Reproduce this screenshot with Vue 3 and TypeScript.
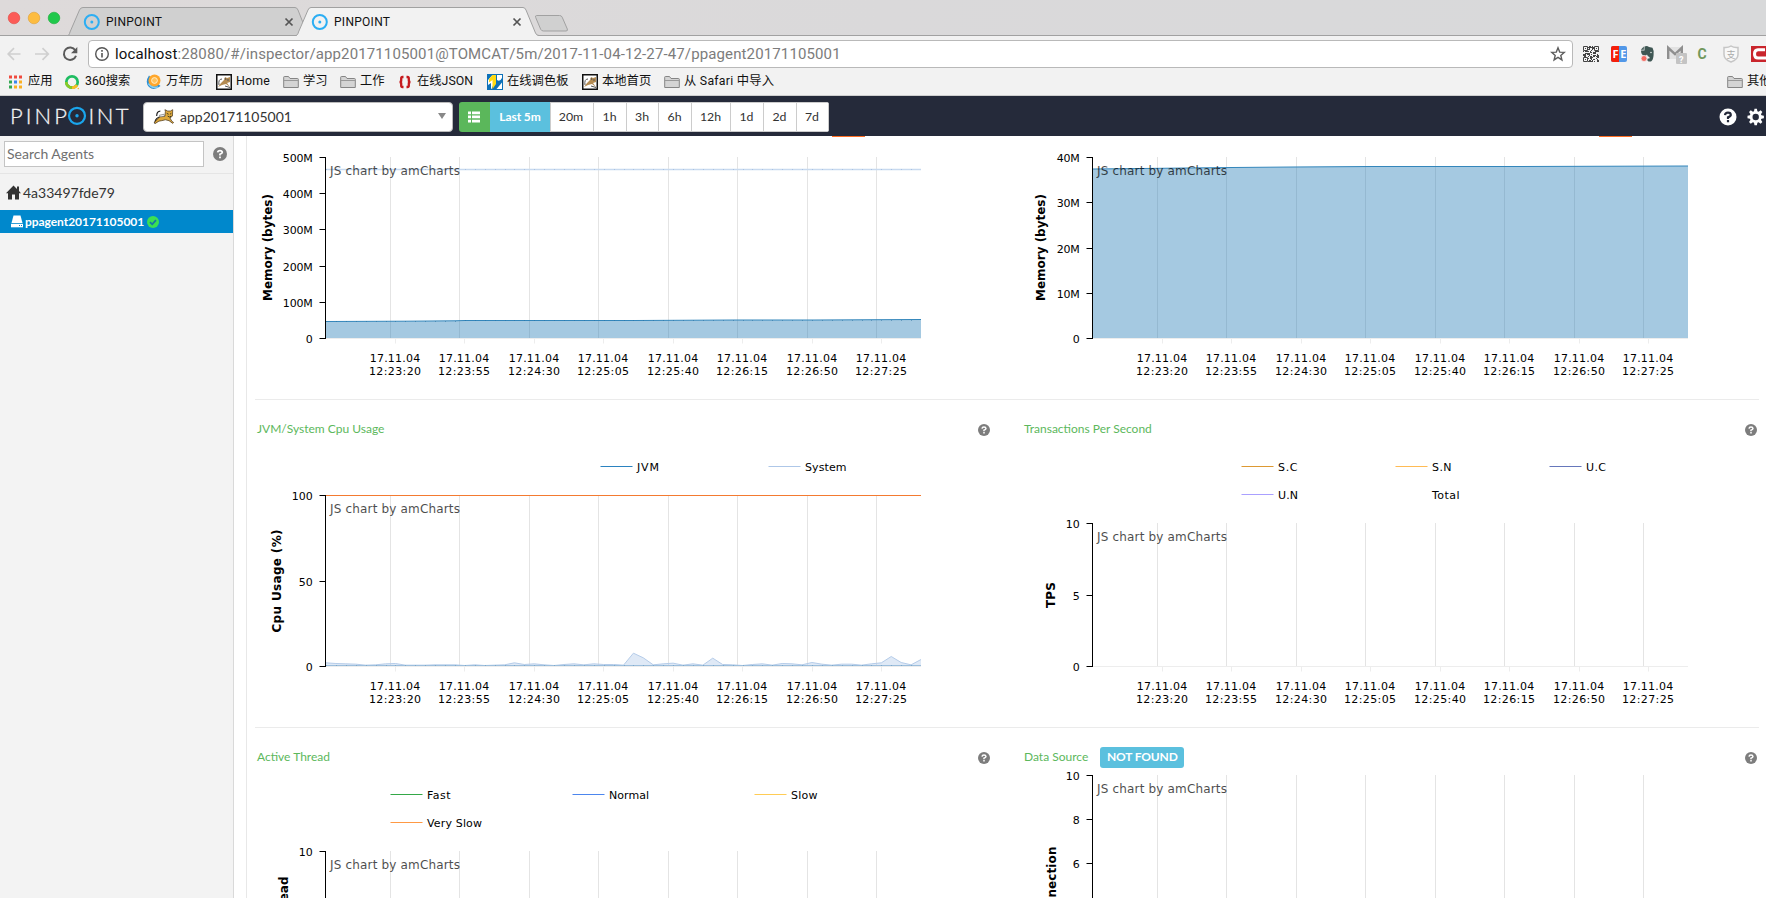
<script setup lang="ts">
interface Tick { y: number; label: string; w: number }
interface Legend { x: number; y: number; label: string; w: number; color: string }
interface Chart {
  key: string
  title: string
  badge?: string
  top: number
  bottom: number
  labelX: number
  ticks: Tick[]
  axis: { text: string; x: number; y: number; w: number }
  legends: Legend[]
  kind?: 'heap' | 'nonheap' | 'cpu'
}

const gridX = [135.5, 204.5, 274.5, 343.5, 413.5, 482.5, 552.5, 621.5]
const times = ['12:23:20', '12:23:55', '12:24:30', '12:25:05', '12:25:40', '12:26:15', '12:26:50', '12:27:25']

const systemCpu = [
  11, 9, 8, 7, 4, 5, 8, 9, 4, 4, 4, 5, 5, 5, 3, 5, 3, 4, 5, 11, 6, 8, 5, 3, 6, 8, 5, 8, 6, 6,
  4, 40, 26, 5, 8, 10, 4, 8, 4, 25, 6, 5, 3, 6, 8, 4, 9, 8, 5, 12, 7, 4, 7, 7, 4, 8, 11, 30, 12, 5, 21,
]
const step = 595 / 60
const cpuPoints = systemCpu.map((v, i) => `${(71 + i * step).toFixed(2)},${(220.5 - v / 3).toFixed(2)}`).join(' ')
const cpuArea = `71,220 ${cpuPoints} 666,220`
const dots = Array.from({ length: 60 }, (_, i) => Math.round(71 + i * step))

const rows: { key: string; height: number; header: boolean; charts: Chart[] }[] = [
  {
    key: 'memory', height: 263, header: false,
    charts: [
      {
        key: 'heap', title: '', top: 21.5, bottom: 202.5, labelX: 57.8, kind: 'heap',
        ticks: [
          { y: 21.5, label: '500M', w: 30 }, { y: 57.5, label: '400M', w: 30 }, { y: 93.5, label: '300M', w: 30 },
          { y: 130.5, label: '200M', w: 30 }, { y: 166.5, label: '100M', w: 30 }, { y: 202.5, label: '0', w: 7 },
        ],
        axis: { text: 'Memory (bytes)', x: 16.5, y: 111.5, w: 107 }, legends: [],
      },
      {
        key: 'nonheap', title: '', top: 21.5, bottom: 202.5, labelX: 57.8, kind: 'nonheap',
        ticks: [
          { y: 21.5, label: '40M', w: 23 }, { y: 66.5, label: '30M', w: 23 }, { y: 112.5, label: '20M', w: 23 },
          { y: 157.5, label: '10M', w: 23 }, { y: 202.5, label: '0', w: 7 },
        ],
        axis: { text: 'Memory (bytes)', x: 23, y: 111.5, w: 107 }, legends: [],
      },
    ],
  },
  {
    key: 'load', height: 281, header: true,
    charts: [
      {
        key: 'cpu', title: 'JVM/System Cpu Usage', top: 49.5, bottom: 220.5, labelX: 57.8, kind: 'cpu',
        ticks: [{ y: 49.5, label: '100', w: 21 }, { y: 135.5, label: '50', w: 14 }, { y: 220.5, label: '0', w: 7 }],
        axis: { text: 'Cpu Usage (%)', x: 26, y: 135, w: 103 },
        legends: [
          { x: 345.5, y: 20.5, label: 'JVM', w: 22, color: '#2b83c0' },
          { x: 513.5, y: 20.5, label: 'System', w: 41.5, color: '#aec7e8' },
        ],
      },
      {
        key: 'tps', title: 'Transactions Per Second', top: 77.5, bottom: 220.5, labelX: 57.8,
        ticks: [{ y: 77.5, label: '10', w: 14 }, { y: 149.5, label: '5', w: 7 }, { y: 220.5, label: '0', w: 7 }],
        axis: { text: 'TPS', x: 33, y: 149, w: 26 },
        legends: [
          { x: 219.5, y: 20.5, label: 'S.C', w: 19.5, color: '#dd9933' },
          { x: 373.5, y: 20.5, label: 'S.N', w: 19.5, color: '#ffbb55' },
          { x: 527.5, y: 20.5, label: 'U.C', w: 20, color: '#6677bb' },
          { x: 219.5, y: 48.5, label: 'U.N', w: 20, color: '#aaa0ff' },
          { x: 373.5, y: 48.5, label: 'Total', w: 27.5, color: 'none' },
        ],
      },
    ],
  },
  {
    key: 'threads', height: 124, header: true,
    charts: [
      {
        key: 'active', title: 'Active Thread', top: 77.5, bottom: 220.5, labelX: 57.8,
        ticks: [{ y: 77.5, label: '10', w: 14 }],
        axis: { text: 'Active Thread', x: 33, y: 149, w: 93 },
        legends: [
          { x: 135.5, y: 20.5, label: 'Fast', w: 23.5, color: '#34a847' },
          { x: 317.5, y: 20.5, label: 'Normal', w: 40, color: '#4c86ee' },
          { x: 499.5, y: 20.5, label: 'Slow', w: 26.5, color: '#ffcc55' },
          { x: 135.5, y: 48.5, label: 'Very Slow', w: 55, color: '#ff9944' },
        ],
      },
      {
        key: 'datasource', title: 'Data Source', badge: 'NOT FOUND', top: 1.5, bottom: 220.5, labelX: 57.8,
        ticks: [{ y: 1.5, label: '10', w: 14 }, { y: 45.5, label: '8', w: 7 }, { y: 89.5, label: '6', w: 7 }],
        axis: { text: 'Connection', x: 34, y: 111, w: 77 }, legends: [],
      },
    ],
  },
]

const tabs = [{ x: 68, active: false }, { x: 296, active: true }]
const ranges = [
  { label: '20m', cls: 'r20' }, { label: '1h', cls: 'r33' }, { label: '3h', cls: 'r32' }, { label: '6h', cls: 'r33' },
  { label: '12h', cls: 'r39' }, { label: '1d', cls: 'r33' }, { label: '2d', cls: 'r33' }, { label: '7d', cls: 'r32' },
]
const bookmarks = [
  { icon: 'apps', label: '应用', cls: 'b1' }, { icon: 'so', label: '360搜索', cls: 'b2' }, { icon: 'cal', label: '万年历', cls: 'b3' },
  { icon: 'cat', label: 'Home', cls: 'b4' }, { icon: 'folder', label: '学习', cls: 'b5' }, { icon: 'folder', label: '工作', cls: 'b6' },
  { icon: 'json', label: '在线JSON', cls: 'b7' }, { icon: 'palette', label: '在线调色板', cls: 'b8' }, { icon: 'cat', label: '本地首页', cls: 'b9' },
  { icon: 'folder', label: '从 Safari 中导入', cls: 'b10' },
]
const appColors = ['#f04a3e', '#f04a3e', '#f04a3e', '#34a853', '#3b86ee', '#fbb023', '#34a853', '#fbb023', '#fbb023']

const qr: { x: number; y: number }[] = []
let seed = 29
for (let y = 0; y < 16; y++) {
  for (let x = 0; x < 16; x++) {
    seed = (seed * 1103 + 12345) % 65536
    const finder = (x < 5 && y < 5) || (x > 10 && y < 5) || (x < 5 && y > 10)
    if (!finder && (seed >> 5) % 100 < 56) qr.push({ x, y })
  }
}
</script>

<template>
  <div class="window">
    <div class="tabstrip">
      <svg class="tabshapes" width="1766" height="36" viewBox="0 0 1766 36">
        <circle cx="14" cy="18" r="5.8" fill="#fc5b57" stroke="#e2463f" stroke-width=".6" />
        <circle cx="34" cy="18" r="5.8" fill="#fdbc40" stroke="#e0a032" stroke-width=".6" />
        <circle cx="54" cy="18" r="5.8" fill="#20c84b" stroke="#18ac36" stroke-width=".6" />
        <path d="M68 35.500 C69 35 69.500 34 70 32 L79.500 10 Q80.500 7.500 83 7.500 H295 Q297 7.500 298 10 L308 35.500Z" fill="#d0d0d0" stroke="#a1a1a1" />
        <path d="M0 35.500H1766" stroke="#a1a1a1" />
        <path d="M296 36 C297.500 35 298 34 298.500 32 L308 10 Q309 7.500 311 7.500 H523 Q525 7.500 526 10 L535.500 33 Q536.500 35.500 539 36Z" fill="#f2f2f2" />
        <path d="M296 35.500 C297.500 35 298 34 298.500 32 L308 10 Q309 7.500 311 7.500 H523 Q525 7.500 526 10 L535.500 33 Q536.500 35.500 539 35.500" fill="none" stroke="#a1a1a1" />
        <path d="M536.500 15.500H559.500Q561.500 15.500 562.200 17.200L567.300 29Q568 31 566 31H543.500Q541.500 31 540.700 29.300L535.700 17.500Q535 15.500 536.500 15.500Z" fill="#d0d0d0" stroke="#a1a1a1" />
        <g v-for="t in tabs" :key="t.x">
          <circle :cx="t.x + 23.800" cy="22" r="7" fill="none" stroke="#2caef3" stroke-width="2" />
          <circle :cx="t.x + 23.800" cy="22" r="1.500" fill="#2caef3" />
          <text :x="t.x + 38" y="26" textLength="56" class="tabtext">PINPOINT</text>
          <path :d="`M${t.x + 217.500} 18.500l7 7m0-7l-7 7`" stroke="#555" stroke-width="1.700" />
        </g>
      </svg>
    </div>

    <div class="toolbar">
      <svg class="nav" width="88" height="32" viewBox="0 0 88 32" fill="none">
        <path d="M20.500 16H8.500M14 10.200L8.200 16L14 21.800" stroke="#cfcfcf" stroke-width="1.700" />
        <path d="M35 16H48M42.500 10.200L48.300 16L42.500 21.800" stroke="#cfcfcf" stroke-width="1.700" />
        <path d="M75.300 12.300A6.200 6.200 0 1 0 76 17.700" stroke="#5a5a5a" stroke-width="2" />
        <path d="M77.300 9v6.300H71z" fill="#5a5a5a" />
      </svg>
      <div class="urlbox">
        <svg width="16" height="16" viewBox="0 0 16 16"><circle cx="8" cy="8" r="6.300" fill="none" stroke="#555" stroke-width="1.400" /><path d="M8 7v4.500M8 4v1.700" stroke="#555" stroke-width="1.600" /></svg>
        <span class="url"><b>localhost</b>:28080/#/inspector/app20171105001@TOMCAT/5m/2017-11-04-12-27-47/ppagent20171105001</span>
        <svg class="star" width="16" height="16" viewBox="0 0 16 16"><path d="M8 1.800l1.700 4.300 4.600.3-3.500 3 1.100 4.500L8 11.400l-3.900 2.500 1.100-4.500-3.500-3 4.600-.3z" fill="none" stroke="#5d5d5d" stroke-width="1.400" /></svg>
      </div>
      <svg class="exts" width="193" height="32" viewBox="0 0 193 32">
        <g transform="translate(10 8)" fill="#444">
          <rect v-for="(p, i) in qr" :key="i" :x="p.x" :y="p.y" width="1" height="1" />
          <path d="M.5.5h4v4h-4zM11.500.5h4v4h-4zM.5 11.500h4v4h-4z" fill="none" stroke="#444" /><path d="M2 2h1v1H2zM13 2h1v1h-1zM2 13h1v1H2z" />
        </g>
        <rect x="38" y="8" width="16" height="16" rx="2" fill="#5298e8" /><path d="M40 8H46V24H40a2 2 0 0 1-2-2V10a2 2 0 0 1 2-2z" fill="#f5200b" />
        <text x="39.500" y="20" textLength="14" class="fe">FE</text>
        <path d="M71.500 8.500Q74 7.500 76 9L79.500 9.800Q81 12 80.600 17 80.300 22 78 23.500H75.500Q73.500 22.500 74.500 20.500H76.500V19Q74.500 18.700 74 16.500 72.500 18.500 70.500 17.500 68 16.500 68 12.500H71.500z" fill="#3f5754" />
        <path d="M67.800 11.800l3-3.300v3.300z" fill="#3f5754" /><circle cx="78" cy="14.500" r=".8" fill="#dfe5e4" /><circle cx="71" cy="20.500" r="3" fill="#f56b62" stroke="#f2f2f2" stroke-width=".8" />
        <path d="M94 9H110V21H94z" fill="#e2e2e2" /><path d="M95.200 21V9.800l6.800 6.400 6.800-6.400V21" fill="none" stroke="#8f8f8f" stroke-width="2.400" />
        <rect x="103" y="15" width="11" height="11" rx="1" fill="#c4c4c4" /><text x="106" y="24.500" class="qm">?</text>
        <text x="124.500" y="20.500" class="greenc">C</text>
        <path d="M158 8q3 2 7 1.500v7q0 5-7 7.500-7-2.500-7-7.500v-7q4 .5 7-1.500z" fill="#f8f8f8" stroke="#c6c6c6" stroke-width="1.500" />
        <text x="153.500" y="19.500" class="zhi">支</text>
        <rect x="178" y="8" width="18" height="16" fill="#c9252c" /><path d="M192 11.800H185Q181.500 12 181.500 16T185 20H193" fill="none" stroke="#fff" stroke-width="3" />
      </svg>
    </div>

    <div class="bookmarks">
      <div v-for="b in bookmarks" :key="b.cls" class="bm" :class="b.cls">
        <svg width="16" height="16" viewBox="0 0 16 16">
          <g v-if="b.icon === 'apps'"><rect v-for="(c, i) in appColors" :key="i" :x="2 + (i % 3) * 5" :y="1.500 + Math.floor(i / 3) * 5" width="3" height="3" :fill="c" /></g>
          <g v-else-if="b.icon === 'so'" fill="none" stroke-width="2.700"><circle cx="8" cy="8" r="5.700" stroke="#20bd62" /><path d="M2.300 8A5.700 5.700 0 0 0 8 13.700" stroke="#8ac926" /><path d="M8 13.700A5.700 5.700 0 0 0 13 11" stroke="#f9bd25" /><circle cx="14.300" cy="14.500" r=".8" fill="#f9bd25" stroke="none" /></g>
          <g v-else-if="b.icon === 'cal'"><path d="M3 1.500Q-1.500 8 3 13 8 17.500 14.500 12L10 8z" fill="#2a8fd5" /><path d="M2.500 9.500q3 5 9.500 3.500" stroke="#86cdf0" stroke-width="1.600" fill="none" /><circle cx="8.500" cy="6.500" r="6" fill="#ffa62b" /><circle cx="8.500" cy="6.500" r="2.900" fill="#ffc15c" stroke="#fff2cf" stroke-width=".9" /></g>
          <g v-else-if="b.icon === 'folder'"><path d="M.7 13.500V3.200Q.7 2.500 1.500 2.500H5.500L7 4.500H14.500Q15.300 4.500 15.300 5.300V13.500z" fill="#d4d4d4" stroke="#858585" /><path d="M1 6.500H15" stroke="#999" /></g>
          <g v-else-if="b.icon === 'json'" fill="none" stroke="#c5191d" stroke-width="2.300"><path d="M6.500 3H5.500Q4.200 3 4.200 4.500V6.500Q4.200 8 2.500 8 4.200 8 4.200 9.500V11.500Q4.200 13 5.500 13H6.500M9.500 3h1q1.300 0 1.300 1.500v2Q11.800 8 13.500 8q-1.700 0-1.700 1.500v2q0 1.500-1.300 1.500h-1" /></g>
          <g v-else-if="b.icon === 'palette'"><rect width="16" height="16" fill="#0d71b9" /><path d="M1 6 5 1.500H7V9L4.500 15H4V9L1 11z" fill="#fff" /><path d="M5.500 1H9V10L5.500 15V6L2 8.500V5z" fill="#ffda12" /><path d="M10 1H15V4Q13 8 10 6z" fill="#fff" /><path d="M9.500 15 15 8.500V15z" fill="#fff" /></g>
          <g v-else><rect x=".75" y=".75" width="14.500" height="14.500" fill="#fff" stroke="#111" stroke-width="1.500" /><path d="M2 13l3-4 3-3 1-3 2 1 3-1v5l-3 1 3 4-4-3-4 1z" fill="#b48b51" /><path d="M3 11q-1-6 3-6M9 12l5 1.500M9 4l1 2m2-1v2" stroke="#555" fill="none" /></g>
        </svg>
        <span>{{ b.label }}</span>
      </div>
      <div class="bm other">
        <svg width="16" height="16" viewBox="0 0 16 16"><path d="M.7 13.500V3.200Q.7 2.500 1.500 2.500H5.500L7 4.500H14.500Q15.300 4.500 15.300 5.300V13.500z" fill="#d4d4d4" stroke="#858585" /><path d="M1 6.500H15" stroke="#999" /></svg>
        <span>其他</span>
      </div>
    </div>

    <header class="appbar">
      <svg class="logo" width="143" height="40" viewBox="0 0 143 40">
        <text x="10" y="27.500" textLength="57" class="logotext">PINP</text>
        <circle cx="77" cy="19.800" r="8" fill="none" stroke="#1aa5ec" stroke-width="2.200" /><circle cx="77" cy="19.800" r="1.700" fill="#1aa5ec" />
        <text x="88.500" y="27.500" textLength="40" class="logotext">INT</text>
      </svg>
      <div class="appselect">
        <svg width="22" height="18" viewBox="0 0 24 18">
          <path d="M4 8Q4 2.500 8 2.500M1.500 16 5 12 M9 9Q3 9 2 15" fill="none" stroke="#222" stroke-width="1.300" />
          <path d="M4 12l4-3.500 5-.5.500-5-.500-2 3 1.500h3l2.500-1.500-.3 7-2.700 2 2 3.500 2 1.500-1 1-4-3-4-1-4 1-3 .5-4 2.500-1-1z" fill="#dea83a" stroke="#4b3820" stroke-width=".8" />
          <path d="M15 5l2 1m3-1-1.500 1M16 8l2 1 2-1" stroke="#332" fill="none" /><path d="M7 7l5-1 1 2-5 1z" fill="#eee" stroke="#555" stroke-width=".6" />
        </svg>
        <span>app20171105001</span>
        <i class="caret"></i>
      </div>
      <div class="ranges">
        <div class="listbtn"><svg width="12" height="12" viewBox="0 0 12 12" fill="#fff"><path d="M0 .5h3v2.700H0zM4 .5h8v2.700H4zM0 4.600h3v2.700H0zM4 4.600h8v2.700H4zM0 8.700h3v2.700H0zM4 8.700h8v2.700H4z" /></svg></div>
        <div class="last">Last 5m</div>
        <div v-for="r in ranges" :key="r.label" class="range" :class="r.cls">{{ r.label }}</div>
      </div>
      <svg class="tools" width="48" height="20" viewBox="0 0 48 20">
        <circle cx="10" cy="10" r="8.500" fill="#fff" /><path d="M7 8.200Q7.200 5.700 10 5.700T12.800 8Q12.800 9.300 10 10.300V12M10 13v2.200" fill="none" stroke="#252a3a" stroke-width="2.200" />
        <g transform="translate(37.700 10)"><path v-for="a in 8" :key="a" d="M-1.900-4.500-1.200-8.200H1.200L1.900-4.500z" fill="#fff" :transform="`rotate(${a * 45})`" /><circle r="4.600" fill="none" stroke="#fff" stroke-width="2.800" /></g>
      </svg>
    </header>

    <div class="body">
      <aside class="side">
        <div class="search">
          <div class="input">Search Agents</div>
          <svg width="14" height="14" viewBox="0 0 12 12"><circle cx="6" cy="6" r="6" fill="#7d7d7d" /><path d="M4 4.600Q4.200 3 6 3T8 4.500Q8 5.500 6 6.200V7.300M6 8.100v1.500" fill="none" stroke="#fff" stroke-width="1.500" /></svg>
        </div>
        <div class="host">
          <svg width="15" height="15" viewBox="0 0 15 15"><path d="M7.500 .5 11 4V1.500h2V6l2 2.200H13V14.500H9V9.500H6V14.500H2V8.200H0z" fill="#333" /></svg>
          <span>4a33497fde79</span>
        </div>
        <div class="agent">
          <svg width="12" height="13" viewBox="0 0 12 13"><path d="M2.500.5h7L11.500 8H.5z" fill="#fff" /><path d="M0 8.800h12V12.300H0z" fill="#fff" /><path d="M8 10.500h1m1 0h1" stroke="#0a84c6" /></svg>
          <span>ppagent20171105001</span>
          <svg width="12" height="12" viewBox="0 0 12 12"><circle cx="6" cy="6" r="6" fill="#3be052" /><path d="M3 6.200 5.200 8.300 9 4.200" fill="none" stroke="#1577a8" stroke-width="1.800" /></svg>
        </div>
      </aside>

      <main class="content">
        <section v-for="row in rows" :key="row.key" class="row" :class="{ ruled: row.header }">
          <article v-for="c in row.charts" :key="c.key" class="panel">
            <div v-if="row.header" class="phead">
              <span class="ptitle">{{ c.title }}</span>
              <span v-if="c.badge" class="badge">{{ c.badge }}</span>
              <svg class="help" width="12" height="12" viewBox="0 0 12 12"><circle cx="6" cy="6" r="6" fill="#7d7d7d" /><path d="M4 4.600Q4.200 3 6 3T8 4.500Q8 5.500 6 6.200V7.300M6 8.100v1.500" fill="none" stroke="#fff" stroke-width="1.500" /></svg>
            </div>
            <svg class="chart" width="767" :height="row.height" :viewBox="`0 0 767 ${row.height}`">
              <path v-if="!row.header" d="M577 .5h33" stroke="#ff6d22" />
              <g v-for="l in c.legends" :key="l.label">
                <path :d="`M${l.x} ${l.y}h32`" :stroke="l.color" stroke-width="1.200" />
                <text :x="l.x + 36.500" :y="l.y + 4" :textLength="l.w" class="lbl">{{ l.label }}</text>
              </g>
              <path v-for="x in gridX" :key="x" :d="`M${x} ${c.top - .5}V${c.bottom + .5}`" stroke="#e4e4e4" />
              <path :d="`M70 ${c.bottom}H666`" stroke="#ededed" />
              <g v-if="c.kind === 'heap'">
                <path d="M71 33.500H666" stroke="#c7d9ef" stroke-width="1.400" />
                <path v-for="d in dots" :key="d" :d="`M${d} 33.500h1`" stroke="#a9c2e2" />
                <path d="M71 185.500 150 185.200 200 184.800 210 184.500H380L480 184H560L666 183.500V202H71z" fill="#1f77b4" fill-opacity=".4" />
                <path d="M71 185.500 150 185.200 200 184.800 210 184.500H380L480 184H560L666 183.500" fill="none" stroke="#3386bb" />
                <path v-for="d in dots" :key="'b' + d" :d="`M${d} ${185.500 - (d > 200 ? 1 : 0)}h1`" stroke="#2a6f9e" stroke-opacity=".5" />
              </g>
              <g v-else-if="c.kind === 'nonheap'">
                <path d="M71 33 120 32.500 210 31.500 270 31 350 30.500 500 30.500 666 30V202H71z" fill="#1f77b4" fill-opacity=".4" />
                <path d="M71 33 120 32.500 210 31.500 270 31 350 30.500 500 30.500 666 30" fill="none" stroke="#3386bb" />
              </g>
              <g v-else-if="c.kind === 'cpu'">
                <polygon :points="cpuArea" fill="#aec7e8" fill-opacity=".4" />
                <polyline :points="cpuPoints" fill="none" stroke="#b5cce9" />
                <path d="M71 219.500H666" stroke="#9dbfdd" />
                <path v-for="d in dots" :key="d" :d="`M${d} 219.500h1`" stroke="#7ea9cb" />
                <path d="M71 49.500H666" stroke="#f47a30" />
              </g>
              <path v-for="t in c.ticks" :key="t.label" :d="`M64.500 ${t.y}H70`" stroke="#000" />
              <path :d="`M70.500 ${c.top - .5}V${c.bottom + .5}`" stroke="#000" />
              <text v-for="t in c.ticks" :key="t.label" :x="c.labelX - t.w" :y="t.y + 4" :textLength="t.w" class="lbl">{{ t.label }}</text>
              <text :transform="`translate(${c.axis.x} ${c.axis.y + c.axis.w / 2}) rotate(-90)`" :textLength="c.axis.w" class="axis">{{ c.axis.text }}</text>
              <template v-if="c.bottom < row.height">
                <g v-for="(t, i) in times" :key="t">
                  <path :d="`M${gridX[i] + 5} ${c.bottom}v5`" stroke="#ededed" />
                  <text :x="gridX[i] - 20.800" :y="c.bottom + 23" textLength="50.500" class="lbl">17.11.04</text>
                  <text :x="gridX[i] - 21.500" :y="c.bottom + 36" textLength="52" class="lbl">{{ t }}</text>
                </g>
              </template>
              <text x="75" :y="c.top + 17" textLength="130" class="credit">JS chart by amCharts</text>
            </svg>
          </article>
        </section>
      </main>
    </div>
  </div>
</template>

<style>
html, body { margin: 0; overflow: hidden; }
</style>

<style scoped>
.window { width: 1766px; height: 898px; overflow: hidden; background: #fff; font-family: Lato, "Noto Sans CJK SC", sans-serif; color: #333; display: flex; flex-direction: column; }
svg { display: block; flex: none; }
.tabstrip { height: 36px; flex: none; background: linear-gradient(90deg, #dedada, #dad9da 50%, #d8d9da); }
.tabtext { font: 12px Roboto, sans-serif; fill: #111; }
.toolbar { height: 32px; flex: none; padding-top: 4px; background: #f2f2f2; display: flex; align-items: flex-start; }
.nav { margin-top: -2px; }
.urlbox { width: 1485px; height: 28px; box-sizing: border-box; border: 1px solid #b9b9b9; border-radius: 4px; background: #fff; display: flex; align-items: center; padding: 0 6px 0 5px; }
.url { font: 15px/26px Roboto, sans-serif; color: #7c7c7c; margin-left: 5px; white-space: nowrap; letter-spacing: .125px; }
.url b { font-weight: 400; color: #111; }
.star { margin-left: auto; }
.exts { margin-top: -2px; }
.fe { font: bold 11px "Open Sans", sans-serif; fill: #fff; }
.qm { font: bold 9px Roboto, sans-serif; fill: #fff; }
.greenc { font: bold 14px Roboto, sans-serif; fill: #71985c; }
.zhi { font: 9px "Noto Sans CJK SC", sans-serif; fill: #aaa; }
.bookmarks { height: 24px; flex: none; box-sizing: border-box; background: #f2f2f2; border-bottom: 1px solid #cfcfcf; display: flex; align-items: flex-start; font: 12.300px/20px Roboto, "Noto Sans CJK SC", sans-serif; color: #111; padding-left: 7px; }
.bm { display: flex; align-items: center; height: 20px; flex: none; white-space: nowrap; gap: 4px; margin-top: -1px; }
.bm svg { margin-top: 2px; }
.b1 { width: 57px; gap: 5px; }
.b2 { width: 82px; gap: 5px; }
.b3 { width: 70px; }
.b4 { width: 67px; letter-spacing: .2px; }
.b5 { width: 57px; }
.b6 { width: 57px; }
.b7 { width: 90px; }
.b8 { width: 95px; }
.b9 { width: 82px; }
.b10 { letter-spacing: .25px; }
.bm.other { margin-left: auto; width: 39px; overflow: hidden; }
.appbar { height: 40px; flex: none; background: #252a3a; display: flex; align-items: center; }
.logotext { font: 300 22px Lato, sans-serif; fill: #f4f4f4; stroke: #f4f4f4; stroke-width: .3px; }
.appselect { width: 310px; height: 30px; margin-top: 2px; box-sizing: border-box; background: #fff; border: 1px solid #bbb; border-radius: 4px; display: flex; align-items: center; padding: 0 6px 0 9px; font-size: 14px; line-height: 28px; }
.appselect span { margin-left: 5px; }
.caret { margin-left: auto; border: 4px solid transparent; border-top: 6px solid #888; border-bottom: 0; margin-bottom: 2px; }
.ranges { margin: 2px 0 0 6px; height: 30px; display: flex; font-size: 12.300px; line-height: 28px; text-align: center; border-radius: 3px; overflow: hidden; }
.ranges > div { box-sizing: border-box; height: 30px; }
.ranges > .listbtn { width: 31px; background: #5bb75b; display: flex; align-items: center; justify-content: center; padding-right: 1px; }
.last { width: 60px; background: #5bc0de; color: #fff; font-weight: 700; font-size: 12px; line-height: 29px; letter-spacing: -.1px; }
.range { background: #fff; border: 1px solid #ccc; border-left-width: 0; padding-right: 1px; }
.r20 { width: 44px; border-left-width: 1px; padding-right: 2px; }
.r32 { width: 32px; }
.r33 { width: 33px; }
.r39 { width: 39px; }
.tools { margin-left: auto; margin-top: 2px; }
.body { flex: 1; min-height: 0; display: flex; }
.side { width: 234px; flex: none; box-sizing: border-box; background: #f3f3f3; border-right: 1px solid #d9d9d9; }
.search { height: 38px; box-sizing: border-box; border-bottom: 1px solid #e5e5e5; display: flex; align-items: flex-start; padding: 5px 0 0 4px; }
.input { width: 200px; height: 26px; box-sizing: border-box; border: 1px solid #c4c4c4; background: #fff; font-size: 14px; line-height: 24px; color: #707070; padding-left: 2px; }
.search svg { margin: 6px 0 0 9px; }
.host { height: 36px; display: flex; align-items: center; padding: 1px 0 0 6px; font-size: 14px; gap: 2px; box-sizing: border-box; }
.agent { height: 23px; background: #0088cc; color: #fff; font-weight: 700; font-size: 12px; display: flex; align-items: center; padding-left: 11px; }
.agent span { margin: 0 4px 0 2px; letter-spacing: -.05px; width: 118px; white-space: nowrap; }
.content { width: 1519px; flex: none; margin-left: 12px; border-left: 1px solid #e8e8e8; overflow: hidden; box-sizing: border-box; padding-left: 8px; }
.row { display: flex; width: 1534px; }
.ruled { background: linear-gradient(#ebebeb, #ebebeb) 0 0 / 1504px 1px no-repeat; }
.panel { width: 767px; flex: none; }
.chart { overflow: visible; }
.phead { height: 47px; display: flex; align-items: center; box-sizing: border-box; padding: 12px 32px 0 2px; font-size: 12px; color: #5cb85c; }
.ptitle { white-space: nowrap; margin-top: -1px; }
.badge { margin-left: 12px; margin-top: 2px; height: 21px; width: 84px; box-sizing: border-box; border-radius: 3px; background: #5bc0de; color: #fff; font-weight: 700; font-size: 12px; line-height: 20px; text-align: center; letter-spacing: -.15px; white-space: nowrap; }
.help { margin-left: auto; margin-top: 2px; }
.lbl { font: 11px "DejaVu Sans", sans-serif; fill: #000; }
.axis { font: bold 12px "DejaVu Sans", sans-serif; fill: #000; }
.credit { font: 12px "DejaVu Sans", sans-serif; fill: #000; opacity: .7; }
</style>
